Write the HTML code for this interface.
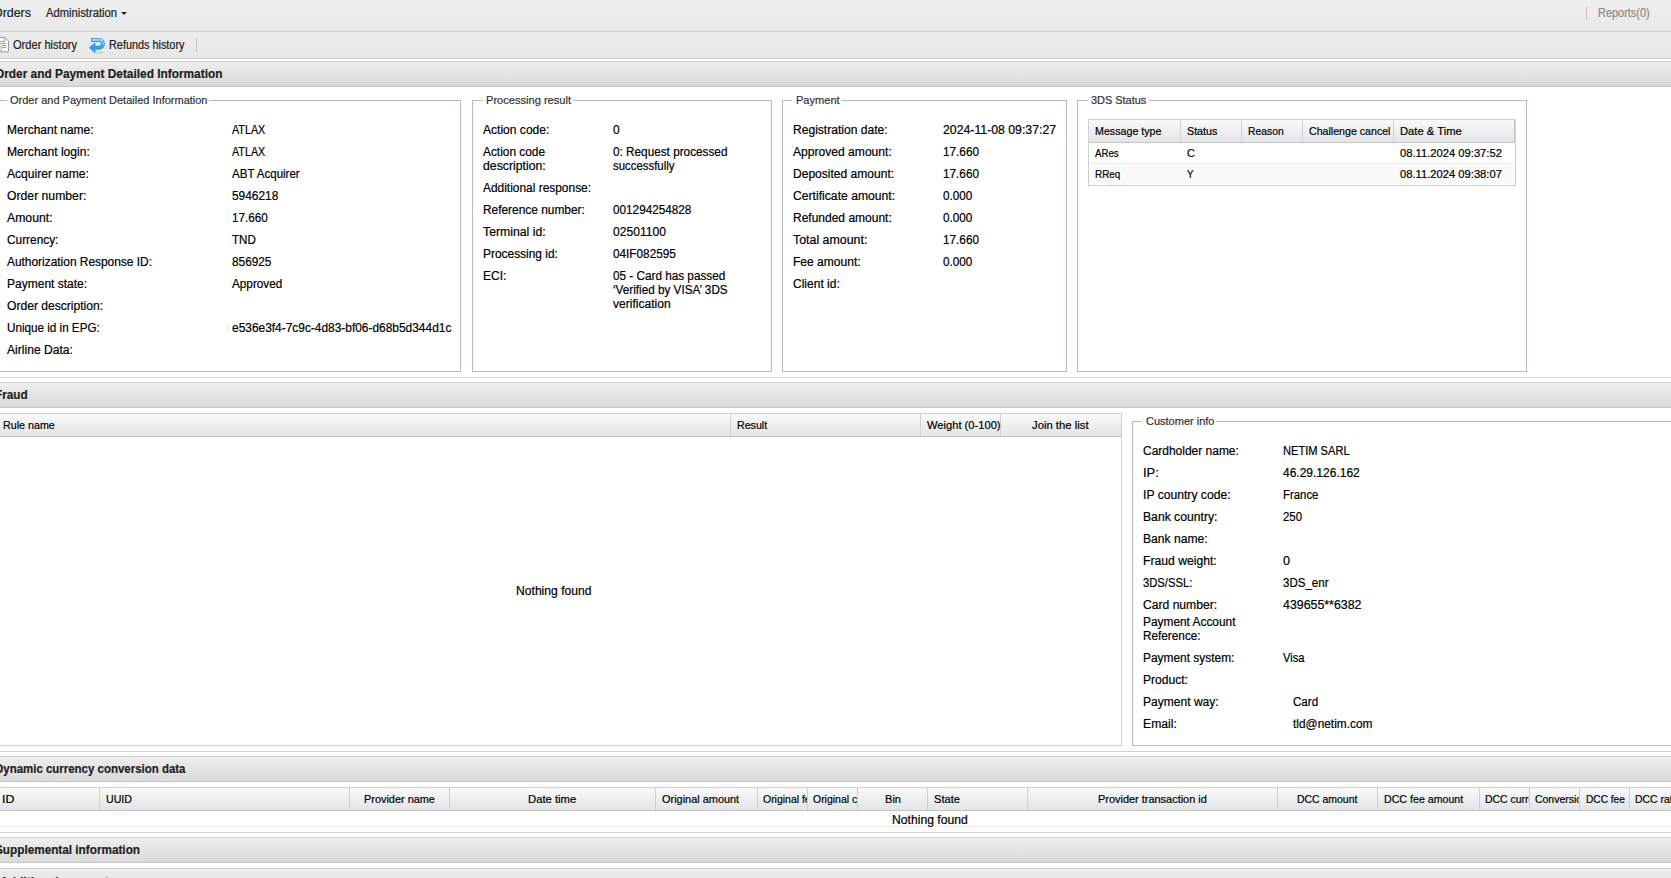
<!DOCTYPE html><html><head><meta charset="utf-8"><style>
*{margin:0;padding:0;box-sizing:border-box}
html,body{width:1671px;height:878px;overflow:hidden;background:#fff}
body{position:relative;font-family:"Liberation Sans",sans-serif;font-size:12px;color:#000}
.a{position:absolute;white-space:nowrap;line-height:14px;transform-origin:0 0;-webkit-text-stroke:0.2px currentColor}
.b{font-weight:bold}
.l{font-size:11px}
.hl{position:absolute;height:1px}
.ph{position:absolute;left:0;width:1671px;height:24px;background:linear-gradient(#eeeeee,#dadada)}
.fs{position:absolute;border:1px solid #b5b8c8}
.gh{position:absolute;background:linear-gradient(#f9f9f9,#e3e4e6)}
</style></head><body>
<div style="position:absolute;left:0;top:0;width:1671px;height:31px;background:linear-gradient(#efefef,#e8e8e8)"></div>
<div class="hl" style="left:0px;top:31px;width:1671px;background:#d0d0d0"></div>
<div style="position:absolute;left:121px;top:12px;width:0;height:0;border-left:3px solid transparent;border-right:3px solid transparent;border-top:3px solid #222"></div>
<div class="hl" style="left:1586px;top:6px;width:1px;height:14px;background:#c9c4b4"></div>
<div style="position:absolute;left:0;top:32px;width:1671px;height:26px;background:linear-gradient(#ececec,#e7e7e7)"></div>
<div class="hl" style="left:0px;top:58px;width:1671px;background:#d0d0d0"></div>
<svg style="position:absolute;left:0;top:34px" width="12" height="22" viewBox="0 0 12 22">
<path d="M-2.5,3.5 H5 L8.5,7 V17.8 H-2.5 Z" fill="#fbfbfb" stroke="#9c9c9c" stroke-width="1"/>
<path d="M-2.5,7.5 H4.5 V3.5" fill="none" stroke="#9c9c9c" stroke-width="1"/>
<path d="M0,9.5 H6 M1.8,11.5 H6 M2.2,13.5 H6" stroke="#9c9c9c" stroke-width="1"/>
<circle cx="-0.5" cy="14.5" r="2.6" fill="#ececec" stroke="#b0b0b0" stroke-width="1"/>
</svg>
<svg style="position:absolute;left:86px;top:34px" width="22" height="22" viewBox="0 0 22 22">
<defs><linearGradient id="rg" x1="0" y1="0" x2="0" y2="1"><stop offset="0" stop-color="#9adcff"/><stop offset="1" stop-color="#16a8f6"/></linearGradient></defs>
<ellipse cx="13" cy="18.6" rx="5" ry="1" fill="#000" opacity="0.10"/>
<path d="M5,5.9 H13 A3.95,3.95 0 0 1 13,13.8 H8.5" fill="none" stroke="#3d8fdc" stroke-width="4"/>
<path d="M3.3,13.8 L9,8.8 V18.8 Z" fill="#3d8fdc" stroke="#3d8fdc" stroke-width="0.6" stroke-linejoin="round"/>
<path d="M5.8,5.9 H13 A3.95,3.95 0 0 1 13,13.8 H8.5" fill="none" stroke="url(#rg)" stroke-width="2.2"/>
<path d="M4.9,13.8 L8.2,10.8 V16.8 Z" fill="#1eaaf5"/>
</svg>
<div class="hl" style="left:196px;top:38px;width:1px;height:14px;background:#c9c4b4"></div>
<div class="hl" style="left:0px;top:61px;width:1671px;background:#d0d0d0"></div>
<div class="ph" style="top:62px"></div>
<div class="hl" style="left:0px;top:86px;width:1671px;background:#c6c6c6"></div>
<div class="fs" style="left:-6px;top:100px;width:467px;height:272px"></div>
<div style="position:absolute;left:6.6px;top:98px;height:5px;width:202.9px;background:#fff"></div>
<div class="fs" style="left:472px;top:100px;width:300px;height:272px"></div>
<div style="position:absolute;left:482.7px;top:98px;height:5px;width:90.40000000000003px;background:#fff"></div>
<div class="fs" style="left:782px;top:100px;width:285px;height:272px"></div>
<div style="position:absolute;left:792.2px;top:98px;height:5px;width:49.5px;background:#fff"></div>
<div class="fs" style="left:1077px;top:100px;width:450px;height:272px"></div>
<div style="position:absolute;left:1087.6px;top:98px;height:5px;width:61.5px;background:#fff"></div>
<div style="position:absolute;left:1088px;top:119px;width:428px;height:67px;border:1px solid #d0d0d0;background:#fff"></div>
<div class="gh" style="left:1089px;top:120px;width:426px;height:22px"></div>
<div class="hl" style="left:1089px;top:142px;width:426px;background:#c5c5c5"></div>
<div class="hl" style="left:1180px;top:120px;width:1px;height:22px;background:#d0d0d0"></div>
<div class="hl" style="left:1241px;top:120px;width:1px;height:22px;background:#d0d0d0"></div>
<div class="hl" style="left:1302px;top:120px;width:1px;height:22px;background:#d0d0d0"></div>
<div class="hl" style="left:1393px;top:120px;width:1px;height:22px;background:#d0d0d0"></div>
<div class="hl" style="left:1514px;top:120px;width:1px;height:22px;background:#c5c5c5"></div>
<div style="position:absolute;left:1089px;top:164px;width:426px;height:21px;background:#fafafa"></div>
<div class="hl" style="left:1089px;top:163px;width:426px;background:#ededed"></div>
<div class="hl" style="left:0px;top:377px;width:1671px;background:#d0d0d0"></div>
<div class="hl" style="left:0px;top:382px;width:1671px;background:#d0d0d0"></div>
<div class="ph" style="top:383px"></div>
<div class="hl" style="left:0px;top:407px;width:1671px;background:#c6c6c6"></div>
<div style="position:absolute;left:-1px;top:413px;width:1123px;height:333px;border:1px solid #d0d0d0"></div>
<div class="gh" style="left:0;top:414px;width:1121px;height:22px"></div>
<div class="hl" style="left:0px;top:436px;width:1121px;background:#c5c5c5"></div>
<div class="hl" style="left:730px;top:414px;width:1px;height:22px;background:#d0d0d0"></div>
<div class="hl" style="left:920px;top:414px;width:1px;height:22px;background:#d0d0d0"></div>
<div class="hl" style="left:1000px;top:414px;width:1px;height:22px;background:#d0d0d0"></div>
<div class="fs" style="left:1132px;top:421px;width:569px;height:325px"></div>
<div style="position:absolute;left:1142.2px;top:419px;height:5px;width:74.29999999999995px;background:#fff"></div>
<div class="hl" style="left:0px;top:751px;width:1671px;background:#d0d0d0"></div>
<div class="hl" style="left:0px;top:756px;width:1671px;background:#d0d0d0"></div>
<div class="ph" style="top:757px"></div>
<div class="hl" style="left:0px;top:781px;width:1671px;background:#c6c6c6"></div>
<div style="position:absolute;left:-1px;top:787px;width:1673px;height:40px;border:1px solid #d0d0d0"></div>
<div class="gh" style="left:0;top:788px;width:1671px;height:22px"></div>
<div class="hl" style="left:0px;top:810px;width:1671px;background:#c5c5c5"></div>
<div class="hl" style="left:99px;top:788px;width:1px;height:22px;background:#d0d0d0"></div>
<div class="hl" style="left:349px;top:788px;width:1px;height:22px;background:#d0d0d0"></div>
<div class="hl" style="left:449px;top:788px;width:1px;height:22px;background:#d0d0d0"></div>
<div class="hl" style="left:655px;top:788px;width:1px;height:22px;background:#d0d0d0"></div>
<div class="hl" style="left:757px;top:788px;width:1px;height:22px;background:#d0d0d0"></div>
<div class="hl" style="left:807px;top:788px;width:1px;height:22px;background:#d0d0d0"></div>
<div class="hl" style="left:857px;top:788px;width:1px;height:22px;background:#d0d0d0"></div>
<div class="hl" style="left:927px;top:788px;width:1px;height:22px;background:#d0d0d0"></div>
<div class="hl" style="left:1027px;top:788px;width:1px;height:22px;background:#d0d0d0"></div>
<div class="hl" style="left:1277px;top:788px;width:1px;height:22px;background:#d0d0d0"></div>
<div class="hl" style="left:1377px;top:788px;width:1px;height:22px;background:#d0d0d0"></div>
<div class="hl" style="left:1479px;top:788px;width:1px;height:22px;background:#d0d0d0"></div>
<div class="hl" style="left:1529px;top:788px;width:1px;height:22px;background:#d0d0d0"></div>
<div class="hl" style="left:1579px;top:788px;width:1px;height:22px;background:#d0d0d0"></div>
<div class="hl" style="left:1629px;top:788px;width:1px;height:22px;background:#d0d0d0"></div>
<div class="hl" style="left:0px;top:826px;width:1671px;background:#ededed"></div>
<div class="hl" style="left:0px;top:832px;width:1671px;background:#d0d0d0"></div>
<div class="hl" style="left:0px;top:837px;width:1671px;background:#d0d0d0"></div>
<div class="ph" style="top:838px"></div>
<div class="hl" style="left:0px;top:862px;width:1671px;background:#c6c6c6"></div>
<div class="hl" style="left:0px;top:868px;width:1671px;background:#d0d0d0"></div>
<div class="ph" style="top:869px"></div>
<div class="hl" style="left:0px;top:893px;width:1671px;background:#c6c6c6"></div>
<div class="a" style="left:-7px;top:6px;transform:scaleX(1.0333);color:#222">Orders</div>
<div class="a" style="left:46px;top:6px;transform:scaleX(0.9333);color:#222">Administration</div>
<div class="a" style="left:1598px;top:6px;transform:scaleX(0.9107);color:#8a8a8a">Reports(0)</div>
<div class="a" style="left:13px;top:38px;transform:scaleX(0.9232);color:#222">Order history</div>
<div class="a" style="left:109px;top:38px;transform:scaleX(0.9048);color:#222">Refunds history</div>
<div class="a b" style="left:-5px;top:67px;transform:scaleX(0.9887);color:#222">Order and Payment Detailed Information</div>
<div class="a l" style="left:10px;top:93px;transform:scaleX(1.0000);color:#333">Order and Payment Detailed Information</div>
<div class="a l" style="left:486px;top:93px;transform:scaleX(1.0071);color:#333">Processing result</div>
<div class="a l" style="left:796px;top:93px;transform:scaleX(1.0047);color:#333">Payment</div>
<div class="a l" style="left:1091px;top:93px;transform:scaleX(0.9929);color:#333">3DS Status</div>
<div class="a" style="left:7px;top:123px;transform:scaleX(0.9988);">Merchant name:</div>
<div class="a" style="left:232px;top:123px;transform:scaleX(0.8946);">ATLAX</div>
<div class="a" style="left:7px;top:145px;transform:scaleX(1.0099);">Merchant login:</div>
<div class="a" style="left:232px;top:145px;transform:scaleX(0.8946);">ATLAX</div>
<div class="a" style="left:7px;top:167px;transform:scaleX(1.0063);">Acquirer name:</div>
<div class="a" style="left:232px;top:167px;transform:scaleX(0.9606);">ABT Acquirer</div>
<div class="a" style="left:7px;top:189px;transform:scaleX(1.0169);">Order number:</div>
<div class="a" style="left:232px;top:189px;transform:scaleX(0.9913);">5946218</div>
<div class="a" style="left:7px;top:211px;transform:scaleX(1.0205);">Amount:</div>
<div class="a" style="left:232px;top:211px;transform:scaleX(0.9750);">17.660</div>
<div class="a" style="left:7px;top:233px;transform:scaleX(0.9882);">Currency:</div>
<div class="a" style="left:232px;top:233px;transform:scaleX(0.9625);">TND</div>
<div class="a" style="left:7px;top:255px;transform:scaleX(0.9924);">Authorization Response ID:</div>
<div class="a" style="left:232px;top:255px;transform:scaleX(0.9850);">856925</div>
<div class="a" style="left:7px;top:277px;transform:scaleX(1.0013);">Payment state:</div>
<div class="a" style="left:232px;top:277px;transform:scaleX(0.9784);">Approved</div>
<div class="a" style="left:7px;top:299px;transform:scaleX(1.0074);">Order description:</div>
<div class="a" style="left:7px;top:321px;transform:scaleX(0.9723);">Unique id in EPG:</div>
<div class="a" style="left:232px;top:321px;transform:scaleX(0.9932);">e536e3f4-7c9c-4d83-bf06-d68b5d344d1c</div>
<div class="a" style="left:7px;top:343px;transform:scaleX(1.0094);">Airline Data:</div>
<div class="a" style="left:483px;top:123px;transform:scaleX(1.0046);">Action code:</div>
<div class="a" style="left:613px;top:123px;transform:scaleX(1.0000);">0</div>
<div class="a" style="left:483px;top:145px;transform:scaleX(0.9887);">Action code</div>
<div class="a" style="left:483px;top:159px;transform:scaleX(1.0217);">description:</div>
<div class="a" style="left:613px;top:145px;transform:scaleX(0.9802);">0: Request processed</div>
<div class="a" style="left:613px;top:159px;transform:scaleX(0.9492);">successfully</div>
<div class="a" style="left:483px;top:181px;transform:scaleX(0.9935);">Additional response:</div>
<div class="a" style="left:483px;top:203px;transform:scaleX(0.9912);">Reference number:</div>
<div class="a" style="left:613px;top:203px;transform:scaleX(0.9787);">001294254828</div>
<div class="a" style="left:483px;top:225px;transform:scaleX(1.0217);">Terminal id:</div>
<div class="a" style="left:613px;top:225px;transform:scaleX(1.0077);">02501100</div>
<div class="a" style="left:483px;top:247px;transform:scaleX(0.9932);">Processing id:</div>
<div class="a" style="left:613px;top:247px;transform:scaleX(0.9812);">04IF082595</div>
<div class="a" style="left:483px;top:269px;transform:scaleX(1.0000);">ECI:</div>
<div class="a" style="left:613px;top:269px;transform:scaleX(0.9781);">05 - Card has passed</div>
<div class="a" style="left:613px;top:283px;transform:scaleX(0.9769);">‘Verified by VISA’ 3DS</div>
<div class="a" style="left:613px;top:297px;transform:scaleX(1.0053);">verification</div>
<div class="a" style="left:793px;top:123px;transform:scaleX(1.0054);">Registration date:</div>
<div class="a" style="left:943px;top:123px;transform:scaleX(1.0227);">2024-11-08 09:37:27</div>
<div class="a" style="left:793px;top:145px;transform:scaleX(1.0072);">Approved amount:</div>
<div class="a" style="left:943px;top:145px;transform:scaleX(0.9806);">17.660</div>
<div class="a" style="left:793px;top:167px;transform:scaleX(1.0040);">Deposited amount:</div>
<div class="a" style="left:943px;top:167px;transform:scaleX(0.9806);">17.660</div>
<div class="a" style="left:793px;top:189px;transform:scaleX(1.0140);">Certificate amount:</div>
<div class="a" style="left:943px;top:189px;transform:scaleX(0.9767);">0.000</div>
<div class="a" style="left:793px;top:211px;transform:scaleX(1.0000);">Refunded amount:</div>
<div class="a" style="left:943px;top:211px;transform:scaleX(0.9767);">0.000</div>
<div class="a" style="left:793px;top:233px;transform:scaleX(1.0324);">Total amount:</div>
<div class="a" style="left:943px;top:233px;transform:scaleX(0.9806);">17.660</div>
<div class="a" style="left:793px;top:255px;transform:scaleX(1.0045);">Fee amount:</div>
<div class="a" style="left:943px;top:255px;transform:scaleX(0.9767);">0.000</div>
<div class="a" style="left:793px;top:277px;transform:scaleX(1.0022);">Client id:</div>
<div class="a l" style="left:1095px;top:124px;transform:scaleX(0.9706);">Message type</div>
<div class="a l" style="left:1187px;top:124px;transform:scaleX(0.9742);">Status</div>
<div class="a l" style="left:1248px;top:124px;transform:scaleX(0.9405);">Reason</div>
<div class="a l" style="left:1309px;top:124px;transform:scaleX(0.9655);">Challenge cancel</div>
<div class="a l" style="left:1400px;top:124px;transform:scaleX(1.0200);">Date &amp; Time</div>
<div class="a l" style="left:1095px;top:146px;transform:scaleX(0.8815);">ARes</div>
<div class="a l" style="left:1187px;top:146px;transform:scaleX(0.9857);">C</div>
<div class="a l" style="left:1400px;top:146px;transform:scaleX(1.0180);">08.11.2024 09:37:52</div>
<div class="a l" style="left:1095px;top:167px;transform:scaleX(0.9000);">RReq</div>
<div class="a l" style="left:1187px;top:167px;transform:scaleX(0.8857);">Y</div>
<div class="a l" style="left:1400px;top:167px;transform:scaleX(1.0180);">08.11.2024 09:38:07</div>
<div class="a b" style="left:-5px;top:388px;transform:scaleX(0.9788);color:#222">Fraud</div>
<div class="a l" style="left:3px;top:418px;transform:scaleX(0.9736);">Rule name</div>
<div class="a l" style="left:737px;top:418px;transform:scaleX(0.9677);">Result</div>
<div class="a l" style="left:927px;top:418px;transform:scaleX(1.0139);">Weight (0-100)</div>
<div class="a l" style="left:1032px;top:418px;transform:scaleX(1.0273);">Join the list</div>
<div class="a" style="left:516px;top:584px;transform:scaleX(1.0108);">Nothing found</div>
<div class="a l" style="left:1146px;top:414px;transform:scaleX(1.0000);color:#333">Customer info</div>
<div class="a" style="left:1143px;top:444px;transform:scaleX(0.9979);">Cardholder name:</div>
<div class="a" style="left:1283px;top:444px;transform:scaleX(0.9250);">NETIM SARL</div>
<div class="a" style="left:1143px;top:466px;transform:scaleX(1.0786);">IP:</div>
<div class="a" style="left:1283px;top:466px;transform:scaleX(1.0000);">46.29.126.162</div>
<div class="a" style="left:1143px;top:488px;transform:scaleX(1.0128);">IP country code:</div>
<div class="a" style="left:1283px;top:488px;transform:scaleX(0.9486);">France</div>
<div class="a" style="left:1143px;top:510px;transform:scaleX(1.0139);">Bank country:</div>
<div class="a" style="left:1283px;top:510px;transform:scaleX(0.9500);">250</div>
<div class="a" style="left:1143px;top:532px;transform:scaleX(1.0095);">Bank name:</div>
<div class="a" style="left:1143px;top:554px;transform:scaleX(1.0139);">Fraud weight:</div>
<div class="a" style="left:1283px;top:554px;transform:scaleX(1.0500);">0</div>
<div class="a" style="left:1143px;top:576px;transform:scaleX(0.9346);">3DS/SSL:</div>
<div class="a" style="left:1283px;top:576px;transform:scaleX(0.9617);">3DS_enr</div>
<div class="a" style="left:1143px;top:598px;transform:scaleX(1.0097);">Card number:</div>
<div class="a" style="left:1283px;top:598px;transform:scaleX(1.0303);">439655**6382</div>
<div class="a" style="left:1143px;top:615px;transform:scaleX(0.9903);">Payment Account</div>
<div class="a" style="left:1143px;top:629px;transform:scaleX(0.9810);">Reference:</div>
<div class="a" style="left:1143px;top:651px;transform:scaleX(0.9934);">Payment system:</div>
<div class="a" style="left:1283px;top:651px;transform:scaleX(0.9304);">Visa</div>
<div class="a" style="left:1143px;top:673px;transform:scaleX(1.0045);">Product:</div>
<div class="a" style="left:1143px;top:695px;transform:scaleX(1.0041);">Payment way:</div>
<div class="a" style="left:1293px;top:695px;transform:scaleX(0.9640);">Card</div>
<div class="a" style="left:1143px;top:717px;transform:scaleX(1.0156);">Email:</div>
<div class="a" style="left:1293px;top:717px;transform:scaleX(0.9912);">tld@netim.com</div>
<div class="a b" style="left:-5px;top:762px;transform:scaleX(0.9550);color:#222">Dynamic currency conversion data</div>
<div class="a l" style="left:2px;top:792px;transform:scaleX(1.1182);">ID</div>
<div class="a l" style="left:106px;top:792px;transform:scaleX(0.9667);">UUID</div>
<div class="a l" style="left:364px;top:792px;transform:scaleX(0.9915);">Provider name</div>
<div class="a l" style="left:528px;top:792px;transform:scaleX(1.0255);">Date time</div>
<div class="a l" style="left:662px;top:792px;transform:scaleX(0.9936);">Original amount</div>
<div class="a l" style="left:885px;top:792px;transform:scaleX(1.0067);">Bin</div>
<div class="a l" style="left:934px;top:792px;transform:scaleX(1.0080);">State</div>
<div class="a l" style="left:1098px;top:792px;transform:scaleX(0.9945);">Provider transaction id</div>
<div class="a l" style="left:1297px;top:792px;transform:scaleX(0.9500);">DCC amount</div>
<div class="a l" style="left:1384px;top:792px;transform:scaleX(0.9671);">DCC fee amount</div>
<div class="a l" style="left:1586px;top:792px;transform:scaleX(0.9214);">DCC fee</div>
<div class="a" style="left:892px;top:813px;transform:scaleX(1.0135);">Nothing found</div>
<div class="a b" style="left:-5px;top:843px;transform:scaleX(0.9797);color:#222">Supplemental information</div>
<div class="a b" style="left:0px;top:875px;color:#222">Additional parameters</div>
<div style="position:absolute;left:763.3px;top:792px;width:43.7px;height:16px;overflow:hidden"><div class="a l" style="left:0;top:0;transform:scaleX(0.95)">Original fee</div></div>
<div style="position:absolute;left:812.8px;top:792px;width:44.2px;height:16px;overflow:hidden"><div class="a l" style="left:0;top:0;transform:scaleX(0.95)">Original currency</div></div>
<div style="position:absolute;left:1485.2px;top:792px;width:43.8px;height:16px;overflow:hidden"><div class="a l" style="left:0;top:0;transform:scaleX(0.95)">DCC currency</div></div>
<div style="position:absolute;left:1534.9px;top:792px;width:44.1px;height:16px;overflow:hidden"><div class="a l" style="left:0;top:0;transform:scaleX(0.95)">Conversion rate</div></div>
<div style="position:absolute;left:1635.4px;top:792px;width:35.6px;height:16px;overflow:hidden"><div class="a l" style="left:0;top:0;transform:scaleX(0.95)">DCC rate</div></div>
</body></html>
